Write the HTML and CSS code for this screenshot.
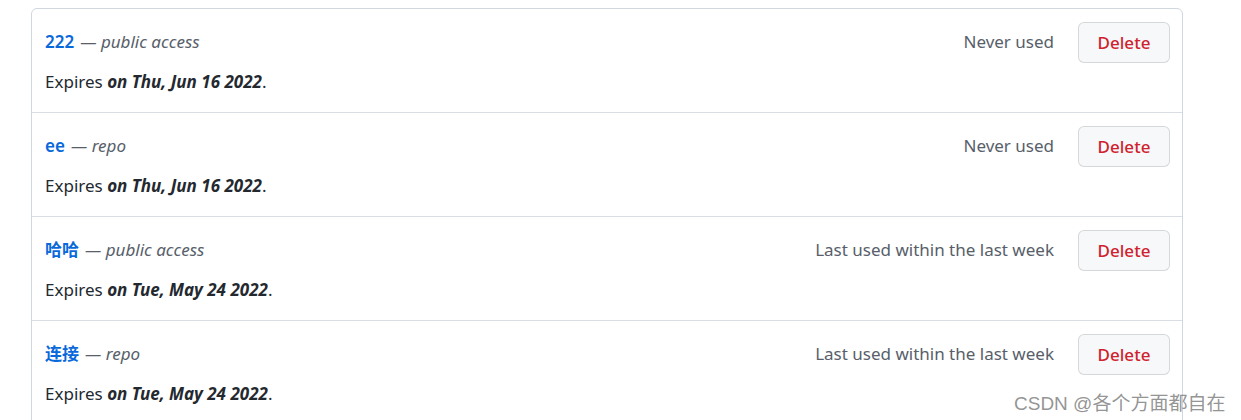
FILE: index.html
```html
<!DOCTYPE html>
<html lang="en">
<head>
  <meta charset="UTF-8" />
  <title>Personal access tokens</title>
  <meta name="viewport" content="width=device-width, initial-scale=1" />
  <link rel="stylesheet" href="styles.css">
</head>
<body>

  <div class="token-list">
    <div class="token">
      <div class="token-info">
        <div class="token-title"><a href="#">222</a> <span class="scope">— public access</span></div>
        <div class="expires">Expires <strong><em>on Thu, Jun 16 2022</em></strong>.</div>
      </div>
      <div class="token-actions">
        <span class="last-used">Never used</span>
        <button class="delete-btn">Delete</button>
      </div>
    </div>

    <div class="token">
      <div class="token-info">
        <div class="token-title"><a href="#">ee</a> <span class="scope">— repo</span></div>
        <div class="expires">Expires <strong><em>on Thu, Jun 16 2022</em></strong>.</div>
      </div>
      <div class="token-actions">
        <span class="last-used">Never used</span>
        <button class="delete-btn">Delete</button>
      </div>
    </div>

    <div class="token">
      <div class="token-info">
        <div class="token-title"><a href="#">哈哈</a> <span class="scope">— public access</span></div>
        <div class="expires">Expires <strong><em>on Tue, May 24 2022</em></strong>.</div>
      </div>
      <div class="token-actions">
        <span class="last-used">Last used within the last week</span>
        <button class="delete-btn">Delete</button>
      </div>
    </div>

    <div class="token">
      <div class="token-info">
        <div class="token-title"><a href="#">连接</a> <span class="scope">— repo</span></div>
        <div class="expires">Expires <strong><em>on Tue, May 24 2022</em></strong>.</div>
      </div>
      <div class="token-actions">
        <span class="last-used">Last used within the last week</span>
        <button class="delete-btn">Delete</button>
      </div>
    </div>
  </div>

  <div class="watermark">CSDN @各个方面都自在</div>

</body>
</html>
```

FILE: styles.css
```css
body {
  margin: 0;
  padding: 8px 0 0 31px;
  font-family: 'Noto Sans', 'Noto Sans CJK SC', sans-serif;
  font-size: 17px;
  color: #24292f;
  background: #fff;
  overflow: hidden;
}

.token-list {
  width: 1150px;
  border: 1px solid #d0d7de;
  border-radius: 6px;
}

.token {
  display: flex;
  justify-content: space-between;
  align-items: flex-start;
  padding: 13px 12px 18px 13px;
  border-bottom: 1px solid #d8dee4;
}

.token-title {
  height: 39px;
  padding-bottom: 2px;
  display: flex;
  align-items: center;
  gap: 6px;
  line-height: 24px;
}

.token-title a {
  color: #0969da;
  font-weight: 600;
  text-decoration: none;
}

.scope {
  color: #57606a;
  font-style: italic;
}

.expires {
  margin-top: 7px;
  line-height: 24px;
}

.expires strong {
  font-weight: 700;
}

.token-actions {
  display: flex;
  align-items: center;
  gap: 24px;
  height: 41px;
}

.last-used {
  color: #57606a;
  padding-bottom: 2px;
}

.delete-btn {
  width: 92px;
  height: 41px;
  font-family: inherit;
  font-size: 17px;
  font-weight: 500;
  color: #cf222e;
  background: #f6f8fa;
  border: 1px solid rgba(27, 31, 36, 0.15);
  border-radius: 6px;
  cursor: pointer;
}

.watermark {
  position: absolute;
  left: 1014px;
  top: 388px;
  font-family: 'Liberation Sans', 'Noto Sans CJK SC', sans-serif;
  font-size: 19px;
  color: rgba(120, 120, 120, 0.8);
}
```
